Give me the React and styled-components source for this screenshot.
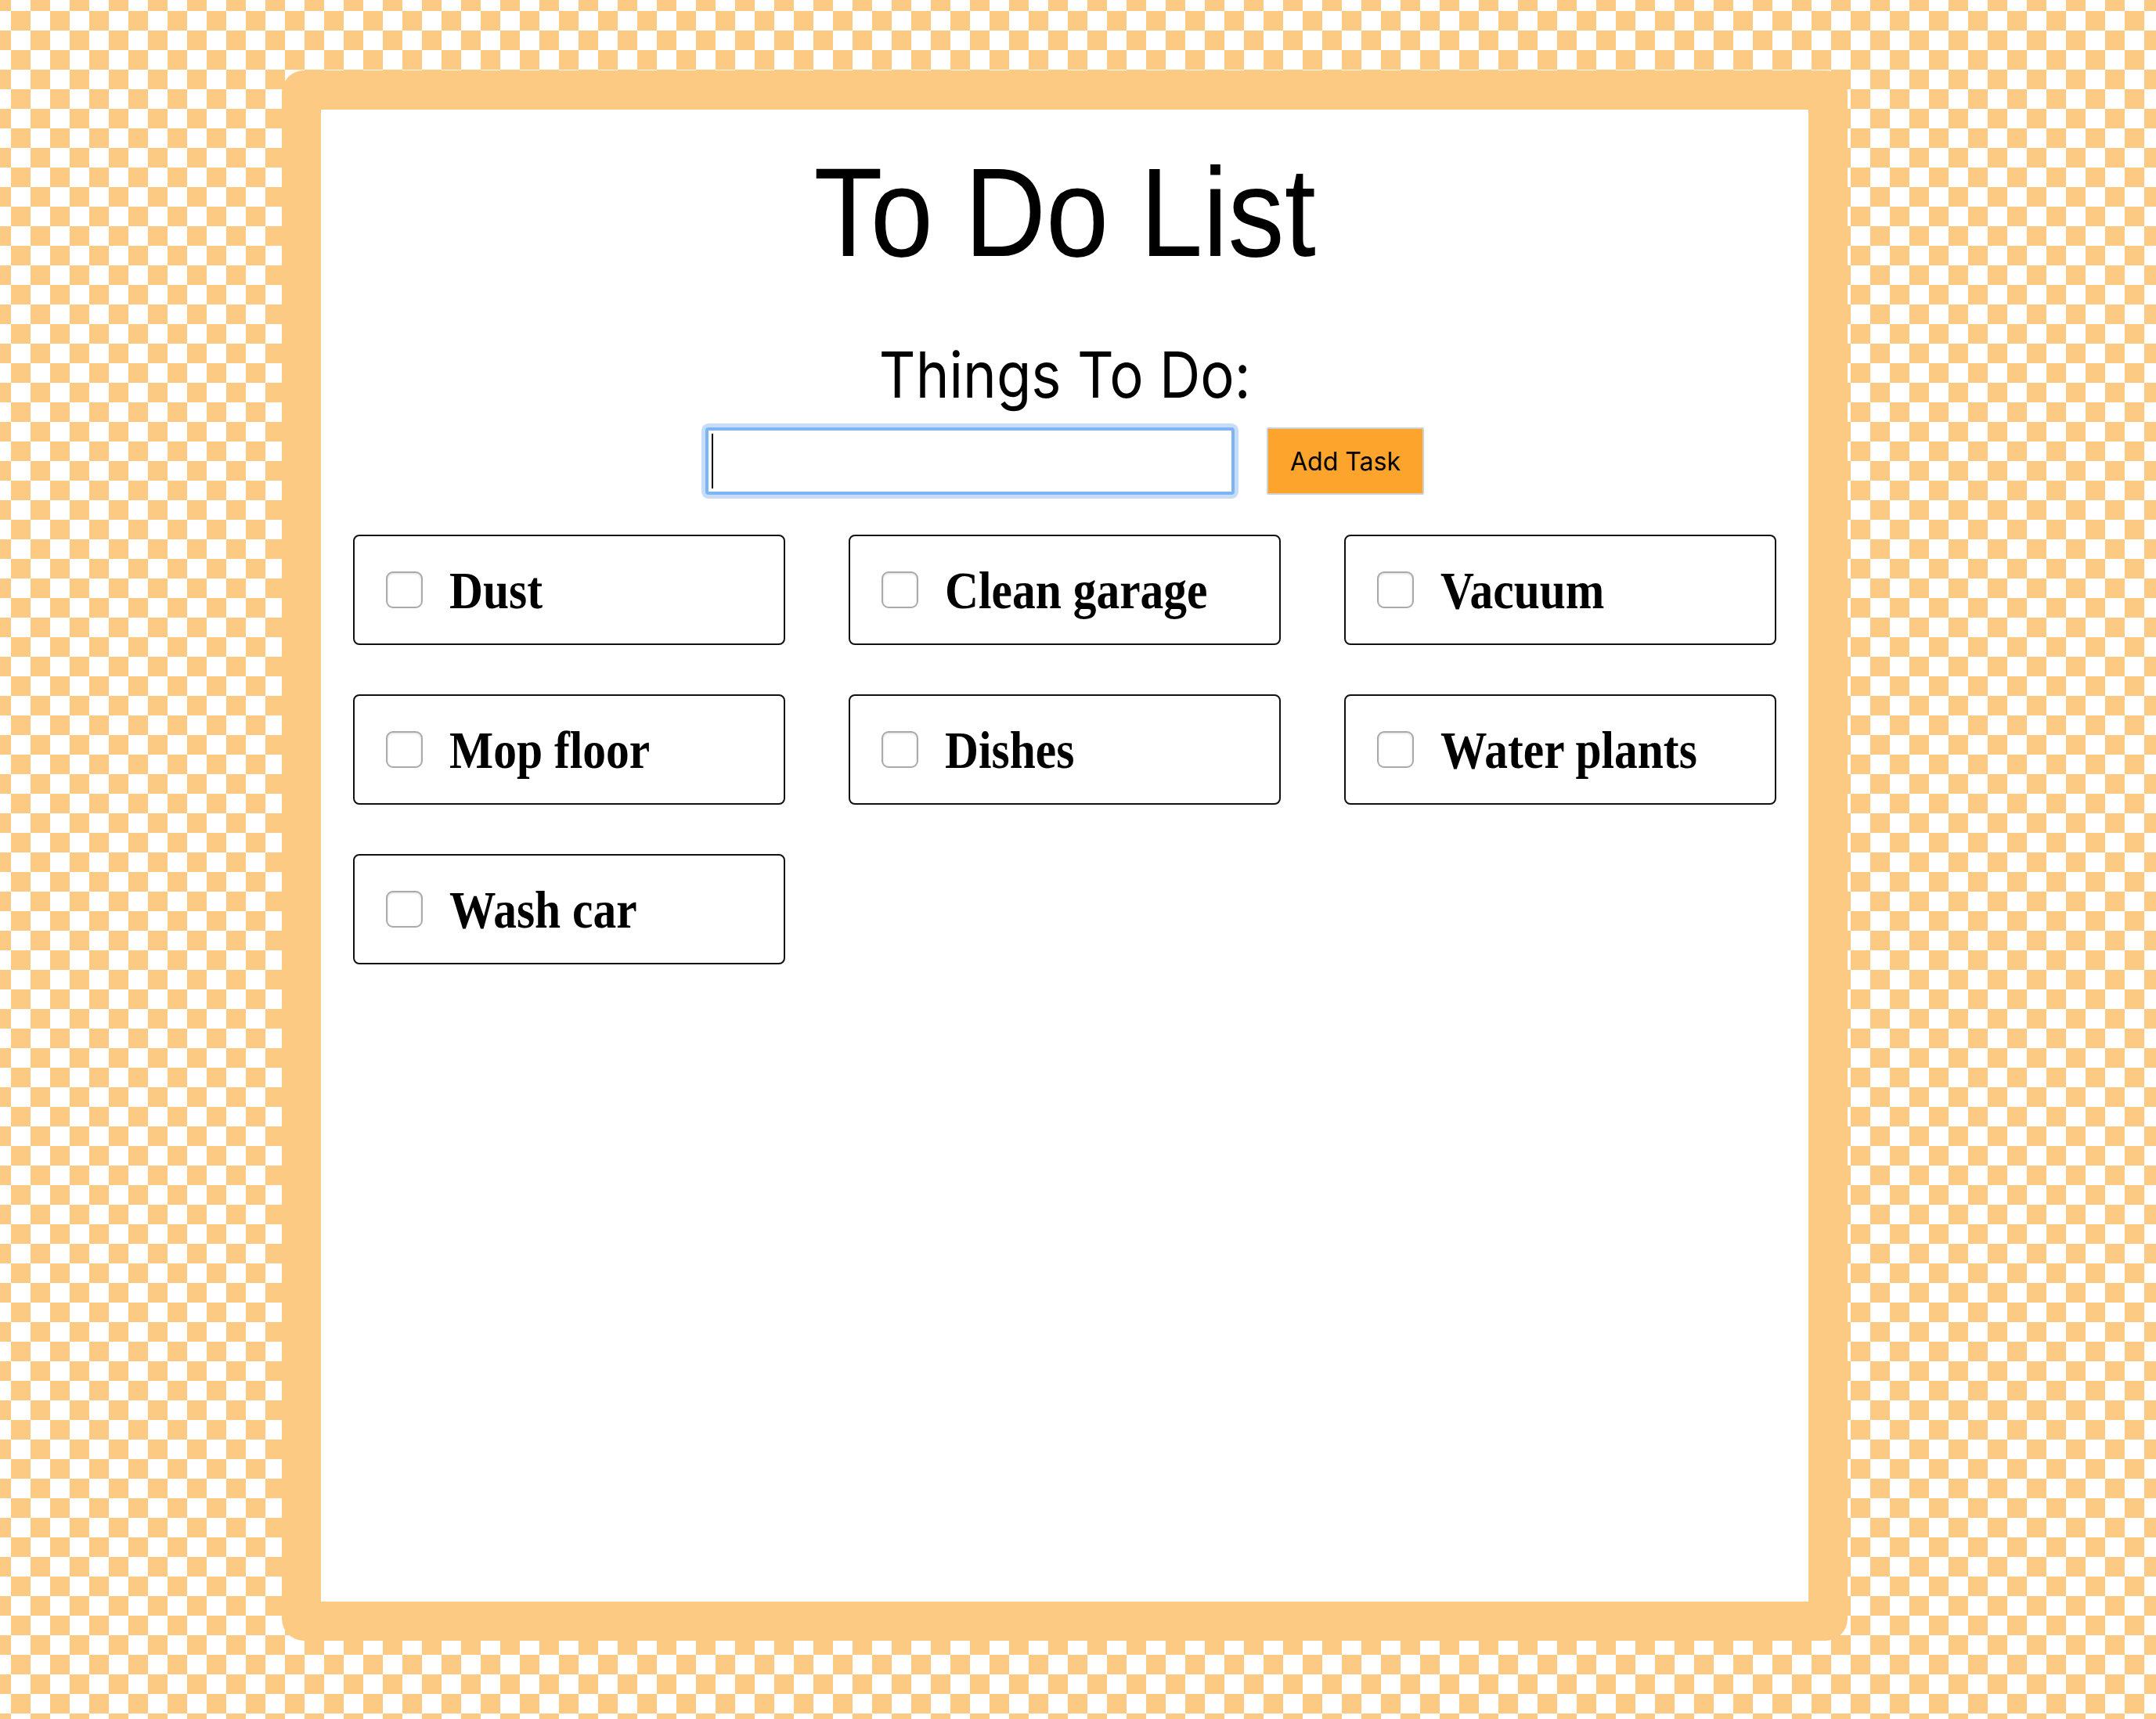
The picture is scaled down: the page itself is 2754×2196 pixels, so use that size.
import React, { useState } from 'react';
import styled, { createGlobalStyle } from 'styled-components';

const GlobalStyle = createGlobalStyle`
  html, body {
    margin: 0;
    padding: 0;
    min-height: 100vh;
  }
  body {
    background: repeating-conic-gradient(#fff 0 25%, #fdca84 0 50%) 14px 14px / 50px 50px;
    font-family: "Liberation Sans", Arial, sans-serif;
  }
`;

const tasks = ['Dust', 'Clean garage', 'Vacuum', 'Mop floor', 'Dishes', 'Water plants', 'Wash car'];

const App = () => {
  const [text, setText] = useState('');

  return (
    <>
      <GlobalStyle />
      <Page>
        <Card>
          <Title>
            <span>To Do List</span>
          </Title>
          <Subtitle>
            <span>Things To Do:</span>
          </Subtitle>
          <InputRow>
            <InputWrap>
              <TaskInput value={text} onChange={e => setText(e.target.value)} />
              {text === '' && <Caret />}
            </InputWrap>
            <AddButton>Add Task</AddButton>
          </InputRow>
          <TaskGrid>
            {tasks.map(task => (
              <TaskCard key={task}>
                <Check type="checkbox" />
                <TaskLabel>{task}</TaskLabel>
              </TaskCard>
            ))}
          </TaskGrid>
        </Card>
      </Page>
    </>
  );
};

export default App;

// Styled Components
const Page = styled.div`
  padding: 90px 0 0 360px;
`;

const Card = styled.div`
  box-sizing: border-box;
  width: 2000px;
  height: 2006px;
  border: 50px solid #fdca84;
  border-radius: 28px;
  background: #fff;
  display: flex;
  flex-direction: column;
  align-items: center;
  padding-top: 50px;
`;

const Title = styled.h1`
  margin: 0;
  font-family: "Liberation Sans", Arial, sans-serif;
  font-weight: 400;
  font-size: 162px;
  line-height: 1;
  color: #000;

  span {
    display: inline-block;
    transform: scaleX(0.89);
  }
`;

const Subtitle = styled.h2`
  margin: 87px 0 0;
  font-family: Inter, "Noto Sans", sans-serif;
  font-weight: 400;
  font-size: 81px;
  line-height: 1;
  color: #000;

  span {
    display: inline-block;
    transform: scaleX(0.895);
  }
`;

const InputRow = styled.div`
  display: flex;
  align-items: center;
  gap: 41px;
  margin-top: 26px;
`;

const InputWrap = styled.div`
  position: relative;
  display: flex;
`;

const TaskInput = styled.input`
  box-sizing: border-box;
  width: 676px;
  height: 86px;
  border: 4px solid #7db5f4;
  border-radius: 4px;
  box-shadow: 0 0 0 5px #c6dcf8;
  outline: none;
  padding: 0 8px;
  font-family: "Liberation Sans", Arial, sans-serif;
  font-size: 40px;
`;

const Caret = styled.span`
  position: absolute;
  left: 8px;
  top: 8px;
  width: 2px;
  height: 70px;
  background: #000;
`;

const AddButton = styled.button`
  box-sizing: border-box;
  width: 201px;
  height: 86px;
  background: #fca42b;
  border: 2px solid #cfcfcf;
  border-radius: 2px;
  font-family: Inter, "Noto Sans", sans-serif;
  font-size: 32px;
  color: #000;
  cursor: pointer;
  padding: 0;
`;

const TaskGrid = styled.div`
  align-self: stretch;
  display: grid;
  grid-template-columns: repeat(3, 552px);
  grid-auto-rows: 141px;
  column-gap: 81px;
  row-gap: 63px;
  padding-left: 41px;
  margin-top: 51px;
`;

const TaskCard = styled.label`
  box-sizing: border-box;
  display: flex;
  align-items: center;
  border: 2px solid #111;
  border-radius: 8px;
  padding-left: 40px;
`;

const Check = styled.input`
  appearance: none;
  -webkit-appearance: none;
  box-sizing: border-box;
  width: 47px;
  height: 47px;
  margin: 0 34px 0 0;
  border: 2px solid #aaa;
  border-radius: 9px;
  background: #fff;
  box-shadow: inset 0 1px 3px rgba(0, 0, 0, 0.15);
  flex: none;

  &:checked {
    background: #2f7de1;
    border-color: #2f7de1;
  }
`;

const TaskLabel = styled.span`
  display: inline-block;
  font-family: "Liberation Serif", "Times New Roman", serif;
  font-weight: 700;
  font-size: 68px;
  line-height: 1;
  color: #000;
  transform: scaleX(0.875);
  transform-origin: left center;
  white-space: nowrap;
`;
